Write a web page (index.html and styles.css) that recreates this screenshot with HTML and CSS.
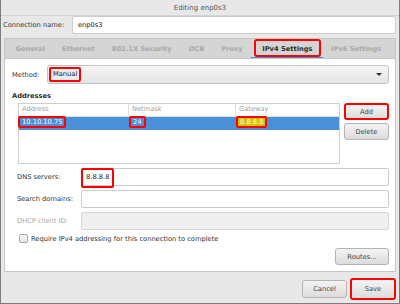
FILE: index.html
```html
<!DOCTYPE html>
<html lang="en">
<head>
    <meta charset="UTF-8">
    <title>Editing enp0s3</title>
    <link rel="stylesheet" href="styles.css">
</head>
<body>
    <div class="window">
        <div class="titlebar">Editing enp0s3</div>

        <div class="name-row">
            <label class="name-label">Connection name:</label>
            <div class="entry name-entry">enp0s3</div>
        </div>

        <div class="tabs">
            <span class="tab">General</span>
            <span class="tab">Ethernet</span>
            <span class="tab">802.1X Security</span>
            <span class="tab">DCB</span>
            <span class="tab">Proxy</span>
            <span class="tab active"><span class="mark">IPv4 Settings</span></span>
            <span class="tab">IPv6 Settings</span>
        </div>

        <div class="page">
            <div class="method-row">
                <span class="field-label">Method:</span>
                <div class="combo">
                    <span class="mark mark-tight">Manual</span>
                    <span class="arrow"></span>
                </div>
            </div>

            <h3 class="section">Addresses</h3>

            <div class="addresses">
                <div class="table">
                    <div class="row head">
                        <span class="cell">Address</span>
                        <span class="cell">Netmask</span>
                        <span class="cell">Gateway</span>
                    </div>
                    <div class="row selected">
                        <span class="cell"><span class="mark mark-tight first">10.10.10.75</span></span>
                        <span class="cell"><span class="mark mark-tight">24</span></span>
                        <span class="cell"><span class="mark mark-tight gw">8.8.8.8</span></span>
                    </div>
                </div>
                <div class="side-buttons">
                    <button class="btn marked">Add</button>
                    <button class="btn">Delete</button>
                </div>
            </div>

            <div class="fields">
                <label class="field-label">DNS servers:</label>
                <div class="entry"><span class="mark mark-tight dns">8.8.8.8</span></div>

                <label class="field-label">Search domains:</label>
                <div class="entry"></div>

                <label class="field-label disabled">DHCP client ID:</label>
                <div class="entry off"></div>
            </div>

            <div class="check-row">
                <span class="checkbox"></span>
                <span>Require IPv4 addressing for this connection to complete</span>
            </div>

            <div class="routes-row">
                <button class="btn routes">Routes...</button>
            </div>
        </div>

        <div class="footer">
            <button class="btn">Cancel</button>
            <button class="btn marked save">Save</button>
        </div>
    </div>
</body>
</html>
```

FILE: styles.css
```css
* {
    box-sizing: border-box;
}

body {
    margin: 0;
    font-family: "DejaVu Sans", "Liberation Sans", sans-serif;
    font-size: 6.7px;
    color: #333;
    background: #e8e8e8;
    white-space: nowrap;
}

.window {
    width: 400px;
    height: 304px;
    background: #e8e8e8;
    border: 1px solid #7c7c7c;
    border-top: none;
    display: flex;
    flex-direction: column;
}

.titlebar {
    height: 16px;
    line-height: 16px;
    text-align: center;
    color: #555;
    font-size: 7px;
    border-bottom: 1px solid #d4d4d4;
}

.name-row {
    display: flex;
    align-items: center;
    padding: 0 3px 0 2px;
    gap: 6px;
}

.name-label {
    width: 63px;
}

.entry {
    height: 18px;
    line-height: 16px;
    padding: 0 5px;
    background: #fff;
    border: 1px solid #cdcdcd;
    border-radius: 2px;
    color: #222;
}

.name-entry {
    flex: 1;
}

.tabs {
    margin: 4px 3px 0;
    height: 20px;
    background: #d5d5d5;
    border: 1px solid #c6c6c6;
    border-bottom: none;
    display: flex;
    align-items: center;
    padding-left: 2px;
}

.tab {
    color: #a9a9a9;
    font-weight: bold;
    padding: 0 8.5px;
}

.tab.active {
    color: #2e2e2e;
    padding: 0 2px 0 3px;
    height: 20px;
    display: flex;
    align-items: center;
    border-bottom: 2px solid #4a90d9;
}

.tab.active .mark {
    padding: 2px 6px;
    height: 18px;
    line-height: 12px;
}

.mark {
    border: 2px solid #f00;
    border-radius: 3px;
}

.mark-tight {
    padding: 0 2px;
    border-radius: 2px;
}

.page {
    margin: 0 3px;
    height: 214px;
    background: #fff;
    border: 1px solid #c6c6c6;
    padding: 6px 6px 0 7px;
}

.method-row {
    display: flex;
    align-items: center;
    height: 19px;
}

.method-row .field-label {
    width: 35px;
}

.combo {
    flex: 1;
    height: 19px;
    display: flex;
    align-items: center;
    justify-content: space-between;
    padding: 0 6px 0 1px;
    border: 1px solid #c4c4c4;
    border-radius: 3px;
    background: linear-gradient(#f6f6f6, #e4e4e4);
    color: #222;
}

.combo .mark {
    line-height: 11px;
    background: #ececec;
}

.arrow {
    width: 0;
    height: 0;
    border-left: 3px solid transparent;
    border-right: 3px solid transparent;
    border-top: 3px solid #333;
}

.section {
    margin: 8px 0 3px;
    font-size: 6.7px;
    font-weight: bold;
    color: #2e2e2e;
}

.addresses {
    display: flex;
    gap: 4px;
    padding-left: 6px;
}

.table {
    width: 325px;
    height: 61px;
    border: 1px solid #cfcfcf;
}

.row {
    display: grid;
    grid-template-columns: 110px 107px 1fr;
    height: 13px;
    line-height: 11px;
}

.row.head {
    color: #a0a0a0;
    border-bottom: 1px solid #e0e0e0;
}

.row.head .cell {
    padding-left: 3px;
    border-right: 1px solid #e0e0e0;
}

.row.head .cell:last-child {
    border-right: none;
}

.row.selected {
    background: #4a90d9;
    color: #fff;
}

.mark.first {
    margin-left: -1px;
}

.gw {
    background: #d6c200;
    color: #fff;
}

.side-buttons {
    display: flex;
    flex-direction: column;
    gap: 3px;
}

.btn {
    font: inherit;
    color: #444;
    width: 45px;
    height: 17px;
    padding: 0;
    border: 1px solid #b4b4b4;
    border-radius: 3px;
    background: linear-gradient(#f4f4f4, #dcdcdc);
}

.btn.marked {
    border: 2px solid #f00;
}

.fields {
    display: grid;
    grid-template-columns: 64px 1fr;
    align-items: center;
    row-gap: 4px;
    margin: 4px 0 0 5px;
}

.fields .entry .mark {
    margin-left: -6px;
    display: inline-block;
    height: 20px;
    line-height: 14px;
    margin-top: -2px;
    padding: 0 3px;
}

.field-label.disabled {
    color: #a8a8a8;
}

.entry.off {
    background: #efefef;
    border-color: #d6d6d6;
}

.check-row {
    display: flex;
    align-items: center;
    gap: 3px;
    margin: 4px 0 0 7px;
    color: #333;
}

.checkbox {
    width: 9px;
    height: 9px;
    border: 1px solid #a8a8a8;
    border-radius: 2px;
    background: linear-gradient(#fafafa, #e6e6e6);
}

.routes-row {
    display: flex;
    justify-content: flex-end;
    margin-top: 5px;
}

.btn.routes {
    width: 54px;
}

.footer {
    display: flex;
    justify-content: flex-end;
    align-items: center;
    gap: 3px;
    padding: 6px 3px 0 0;
}

.footer .btn {
    height: 18px;
}

.footer .btn.save {
    width: 46px;
    height: 22px;
}
```
